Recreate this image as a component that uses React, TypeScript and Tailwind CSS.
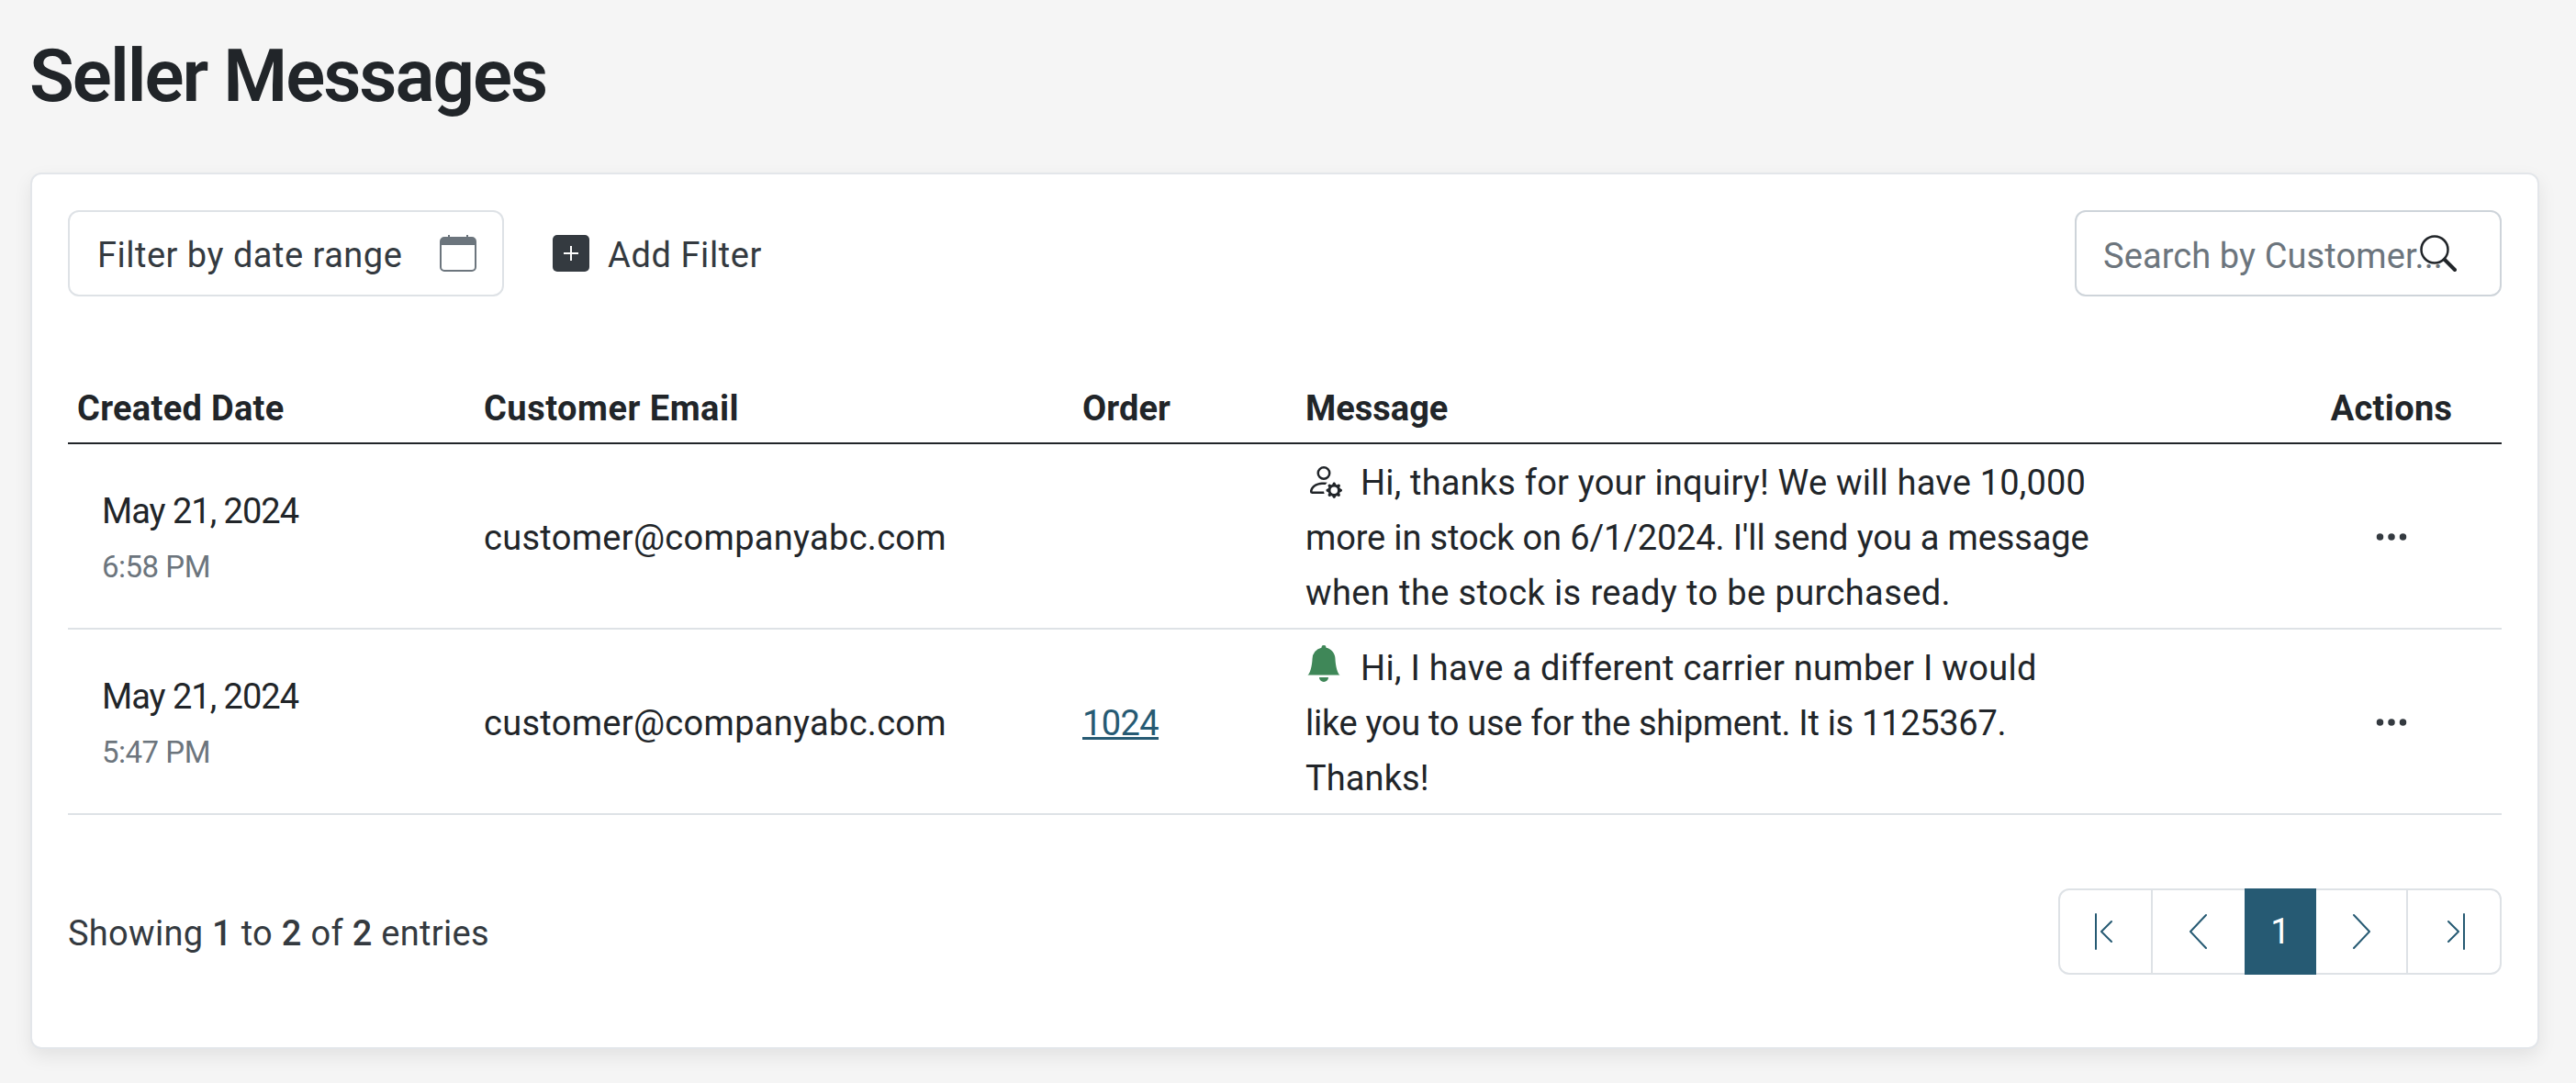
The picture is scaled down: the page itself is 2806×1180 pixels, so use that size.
import React from 'react';
import { BsPersonGear, BsBellFill, BsThreeDots } from 'react-icons/bs';

const rows = [
  {
    date: 'May 21, 2024',
    time: '6:58 PM',
    email: 'customer@companyabc.com',
    order: '',
    icon: <BsPersonGear className="mr-[20px] inline-block h-[40px] w-[40px] align-[-4px] text-[#212529]" />,
    lines: [
      { text: 'Hi, thanks for your inquiry! We will have 10,000', cls: 'tracking-[0.2px]' },
      { text: "more in stock on 6/1/2024. I'll send you a message", cls: 'tracking-[-0.15px]' },
      { text: 'when the stock is ready to be purchased.', cls: 'tracking-[0.4px]' },
    ],
  },
  {
    date: 'May 21, 2024',
    time: '5:47 PM',
    email: 'customer@companyabc.com',
    order: '1024',
    icon: <BsBellFill className="mr-[20px] inline-block h-[40px] w-[40px] align-[-2px] text-[#3f8758]" />,
    lines: [
      { text: 'Hi, I have a different carrier number I would', cls: 'tracking-[0.3px]' },
      { text: 'like you to use for the shipment. It is 1125367.', cls: 'tracking-[-0.3px]' },
      { text: 'Thanks!', cls: 'tracking-[0.1px]' },
    ],
  },
];

function App() {
  return (
    <div className="min-h-screen bg-[#f5f5f5] pl-[33px] pr-[40px] pt-[28px] font-['Roboto',sans-serif] text-[38px] leading-[60px] text-[#212529]">
      <h1 className="-ml-[1px] h-[160px] text-[80px] leading-[110px] font-semibold tracking-[-2px]">Seller Messages</h1>

      <div className="h-[955px] rounded-[12px] border-2 border-[#e3e6ea] bg-white px-[39px] pt-[39px] shadow-[0_8px_20px_rgba(0,0,0,0.08)]">
        {/* Toolbar */}
        <div className="flex h-[94px] items-center">
          <div className="flex h-[94px] w-[475px] items-center justify-between rounded-[12px] border-2 border-[#dee2e6] pl-[30px] pr-[28px]">
            <span className="pt-[4px] tracking-[0.5px] text-[#343a40]">Filter by date range</span>
            <svg viewBox="0 0 40 40" className="h-[40px] w-[40px]">
              <path d="M10 0v5M30 0v5" stroke="#6c757d" strokeWidth="2" />
              <rect x="1" y="3" width="38" height="36" rx="4" fill="#fff" stroke="#6c757d" strokeWidth="2" />
              <path d="M1 7a4 4 0 0 1 4-4h30a4 4 0 0 1 4 4v4H1z" fill="#6c757d" />
            </svg>
          </div>
          <div className="ml-[53px] flex items-center">
            <svg viewBox="0 0 40 40" className="h-[40px] w-[40px]">
              <rect width="40" height="40" rx="5" fill="#343a40" />
              <path d="M20 12v16M12 20h16" stroke="#fff" strokeWidth="2" />
            </svg>
            <span className="ml-[20px] pt-[4px] tracking-[0.6px] text-[#343a40]">Add Filter</span>
          </div>
          <div className="relative ml-auto h-[94px] w-[465px] rounded-[12px] border-2 border-[#ced4da] pl-[29px] pt-[18px] tracking-[0.1px] text-[#6c757d]">
            Search by Customer...
            <svg viewBox="0 0 40 40" className="absolute left-[374px] top-[25px] h-[40px] w-[40px]" fill="none" stroke="#212529">
              <circle cx="16" cy="16" r="14.5" strokeWidth="2.5" />
              <path d="M27 27l11 11" strokeWidth="4" strokeLinecap="round" />
            </svg>
          </div>
        </div>

        {/* Messages table */}
        <table className="mt-[92px] w-[2651px] table-fixed border-collapse">
          <colgroup>
            <col className="w-[444px]" />
            <col className="w-[652px]" />
            <col className="w-[243px]" />
            <col className="w-[1072px]" />
            <col className="w-[240px]" />
          </colgroup>
          <thead>
            <tr className="border-b-2 border-[#212529]">
              <th className="h-[67px] pb-[7px] pl-[10px] text-left align-bottom font-bold tracking-[0.3px]">Created Date</th>
              <th className="h-[67px] pb-[7px] pl-[9px] text-left align-bottom font-bold tracking-[0.5px]">Customer Email</th>
              <th className="h-[67px] pb-[7px] pl-[9px] text-left align-bottom font-bold tracking-[0.1px]">Order</th>
              <th className="h-[67px] pb-[7px] pl-[9px] text-left align-bottom font-bold">Message</th>
              <th className="h-[67px] pb-[7px] text-center align-bottom font-bold tracking-[0.3px]">Actions</th>
            </tr>
          </thead>
          <tbody>
            {rows.map((row) => (
              <tr key={row.time} className="border-b-2 border-[#dee2e6]">
                <td className="h-[202px] pl-[37px] pt-[2px] align-middle">
                  <div className="tracking-[-1px]">{row.date}</div>
                  <div className="mt-[6px] text-[33px] leading-[50px] tracking-[-0.5px] text-[#6c757d]">{row.time}</div>
                </td>
                <td className="pl-[9px] pt-[4px] align-middle tracking-[0.3px]">{row.email}</td>
                <td className="pl-[9px] pt-[4px] align-middle">
                  {row.order && <a className="tracking-[-0.6px] text-[#265a73] underline">{row.order}</a>}
                </td>
                <td className="pl-[9px] pt-[4px] align-middle">
                  {row.lines.map((line, i) => (
                    <div key={line.text} className={line.cls}>
                      {i === 0 && row.icon}
                      {line.text}
                    </div>
                  ))}
                </td>
                <td className="pb-[4px] text-center align-middle">
                  <BsThreeDots className="inline-block h-[40px] w-[40px] text-[#343a40]" />
                </td>
              </tr>
            ))}
          </tbody>
        </table>

        {/* Footer */}
        <div className="mt-[80px] flex items-center justify-between">
          <div className="pt-[4px] tracking-[0.3px] text-[#343a40]">
            Showing <span className="font-medium">1</span> to <span className="font-medium">2</span> of <span className="font-medium">2</span> entries
          </div>
          <div className="flex h-[94px] w-[483px] rounded-[12px] border-2 border-[#dee2e6] text-[#265a73]">
            <button className="flex w-[101px] items-center justify-center border-r-2 border-[#dee2e6]">
              <svg viewBox="0 0 40 40" className="h-[40px] w-[40px]" fill="none" stroke="currentColor" strokeWidth="2" strokeLinecap="round" strokeLinejoin="round">
                <path d="M9 1v38M26 9L15 20l11 11" />
              </svg>
            </button>
            <button className="flex w-[100px] items-center justify-center">
              <svg viewBox="0 0 40 40" className="h-[40px] w-[40px]" fill="none" stroke="currentColor" strokeWidth="2" strokeLinecap="round" strokeLinejoin="round">
                <path d="M28 2L11 20l17 18" />
              </svg>
            </button>
            <button className="-my-[2px] flex w-[78px] items-center justify-center bg-[#265a73] text-white">1</button>
            <button className="flex w-[100px] items-center justify-center border-r-2 border-[#dee2e6]">
              <svg viewBox="0 0 40 40" className="h-[40px] w-[40px]" fill="none" stroke="currentColor" strokeWidth="2" strokeLinecap="round" strokeLinejoin="round">
                <path d="M12 2l17 18-17 18" />
              </svg>
            </button>
            <button className="flex flex-1 items-center justify-center">
              <svg viewBox="0 0 40 40" className="h-[40px] w-[40px]" fill="none" stroke="currentColor" strokeWidth="2" strokeLinecap="round" strokeLinejoin="round">
                <path d="M31 1v38M14 9l11 11-11 11" />
              </svg>
            </button>
          </div>
        </div>
      </div>
    </div>
  );
}

export default App;
